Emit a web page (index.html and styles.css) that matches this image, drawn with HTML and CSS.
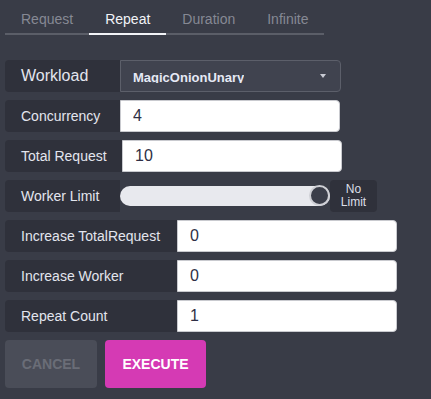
FILE: index.html
```html
<!DOCTYPE html>
<html>
<head>
<meta charset="utf-8">
<link rel="stylesheet" href="styles.css">
</head>
<body>
<div class="tabs">
  <div class="tab">Request</div>
  <div class="tab active">Repeat</div>
  <div class="tab">Duration</div>
  <div class="tab">Infinite</div>
</div>
<div class="form">
  <div class="row">
    <div class="label w115 big">Workload</div>
    <div class="select"><span class="select-text">MagicOnionUnary</span><span class="caret"></span></div>
  </div>
  <div class="row">
    <div class="label w115">Concurrency</div>
    <input class="field" type="text" value="4">
  </div>
  <div class="row">
    <div class="label w117">Total Request</div>
    <input class="field" type="text" value="10">
  </div>
  <div class="row">
    <div class="label w115">Worker Limit</div>
    <div class="slider"><div class="track"><div class="thumb"></div></div></div>
    <div class="nolimit">No<br>Limit</div>
  </div>
  <div class="row">
    <div class="label w172">Increase TotalRequest</div>
    <input class="field" type="text" value="0">
  </div>
  <div class="row">
    <div class="label w172">Increase Worker</div>
    <input class="field" type="text" value="0">
  </div>
  <div class="row">
    <div class="label w172">Repeat Count</div>
    <input class="field" type="text" value="1">
  </div>
  <div class="buttons">
    <button class="btn cancel">CANCEL</button>
    <button class="btn execute">EXECUTE</button>
  </div>
</div>
</body>
</html>
```
FILE: styles.css
```css
html, body {
  margin: 0;
  padding: 0;
  background: #393c47;
  font-family: "Liberation Sans", Arial, sans-serif;
}
.tabs {
  display: flex;
  margin-left: 5px;
  width: 319px;
  border-bottom: 2px solid #5b5e68;
}
.tab {
  padding: 11px 16px 6px;
  height: 16px;
  line-height: 16px;
  font-size: 14px;
  color: #868994;
  white-space: nowrap;
}
.tab.active {
  color: #f2f3f7;
  border-bottom: 2px solid #f2f3f7;
  margin-bottom: -2px;
}
.form {
  margin-top: 25px;
  padding-left: 5px;
}
.row {
  display: flex;
  height: 32px;
  margin-bottom: 8px;
}
.label {
  box-sizing: border-box;
  flex: none;
  display: flex;
  align-items: center;
  padding: 0 12px 0 16px;
  background: #2f313b;
  border-radius: 4px 0 0 4px;
  color: #e3e5ee;
  font-size: 14px;
  white-space: nowrap;
}
.label.big { font-size: 16px; }
.w115 { width: 115px; }
.w117 { width: 117px; }
.w172 { width: 172px; }
.select {
  box-sizing: border-box;
  width: 221px;
  height: 32px;
  background: #40434f;
  border: 1px solid #5c5f6a;
  border-radius: 0 4px 4px 0;
  display: flex;
  align-items: center;
  justify-content: space-between;
  padding: 0 14px 0 12px;
}
.select-text {
  display: block;
  height: 12px;
  line-height: 13px;
  overflow: hidden;
  font-size: 13px;
  font-weight: bold;
  color: #e6e9f5;
  margin-top: 1px;
}
.caret {
  width: 0;
  height: 0;
  border-left: 3px solid transparent;
  border-right: 3px solid transparent;
  border-top: 4px solid #c9cbd4;
}
.field {
  box-sizing: border-box;
  width: 220px;
  height: 32px;
  margin: 0;
  border: 1px solid #c9cacf;
  border-radius: 0 4px 4px 0;
  background: #ffffff;
  padding: 0 12px;
  font-family: "Liberation Sans", Arial, sans-serif;
  font-size: 16px;
  color: #2e2f45;
  outline: none;
}
.slider {
  width: 210px;
  display: flex;
  align-items: center;
}
.track {
  width: 210px;
  height: 20px;
  border-radius: 10px;
  background: #e8e9ee;
  display: flex;
  justify-content: flex-end;
  align-items: center;
}
.thumb {
  box-sizing: border-box;
  width: 21px;
  height: 21px;
  border-radius: 50%;
  background: #3b3e4a;
  border: 2px solid #cfd0d6;
  margin-top: -1px;
}
.nolimit {
  box-sizing: border-box;
  width: 47px;
  height: 32px;
  background: #2f313b;
  border-radius: 4px;
  color: #dcdfe8;
  font-size: 12px;
  line-height: 13px;
  text-align: center;
  padding-top: 3px;
}
.buttons {
  display: flex;
  gap: 8px;
}
.btn {
  height: 48px;
  padding: 0 10px;
  border: none;
  border-radius: 4px;
  font-family: "Liberation Sans", Arial, sans-serif;
  font-size: 14px;
  font-weight: bold;
  white-space: nowrap;
}
.cancel {
  width: 92px;
  background: #4a4d58;
  color: #6a6d77;
}
.execute {
  width: 101px;
  background: #d53ab4;
  color: #ffffff;
}
```
